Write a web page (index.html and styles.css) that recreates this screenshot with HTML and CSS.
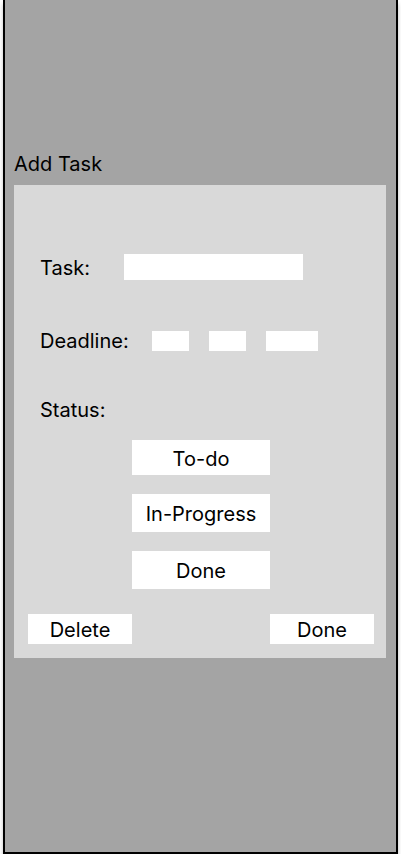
FILE: index.html
```html
<!DOCTYPE html>
<html lang="en">
<head>
    <meta charset="UTF-8">
    <meta name="viewport" content="width=device-width, initial-scale=1.0">
    <title>Add Task</title>
    <link rel="stylesheet" href="styles.css">
</head>
<body>
    <div class="pantalla">
        <h1 class="titulo">Add Task</h1>
        <div class="panel">
            <div class="fila fila-tarea">
                <span class="etiqueta">Task:</span>
                <div class="campo campo-tarea"></div>
            </div>
            <div class="fila fila-fecha">
                <span class="etiqueta">Deadline:</span>
                <div class="fechas">
                    <div class="campo campo-dia"></div>
                    <div class="campo campo-dia"></div>
                    <div class="campo campo-anio"></div>
                </div>
            </div>
            <span class="etiqueta etiqueta-estado">Status:</span>
            <div class="estados">
                <button class="estado estado-todo">To-do</button>
                <button class="estado">In-Progress</button>
                <button class="estado">Done</button>
            </div>
            <div class="acciones">
                <button class="accion">Delete</button>
                <button class="accion">Done</button>
            </div>
        </div>
    </div>
</body>
</html>
```

FILE: styles.css
```css
*{
    margin: 0;
    padding: 0;
    box-sizing: border-box;
}
body{
    background: #fff;
    font-family: Inter, "Noto Sans", sans-serif;
    color: #000;
}
.pantalla{
    width: 395px;
    height: 854px;
    margin-left: 3px;
    padding: 152px 9px 0 9px;
    background: #a4a4a4;
    border: 2px solid #000;
    border-top: none;
    box-shadow: 0 4px 4px rgba(0, 0, 0, 0.25);
}
.titulo{
    font-size: 20px;
    font-weight: 400;
    line-height: 24px;
    margin-bottom: 9px;
}
.panel{
    width: 372px;
    height: 473px;
    padding: 69px 12px 0 14px;
    background: #d9d9d9;
    display: flex;
    flex-direction: column;
}
.etiqueta{
    font-size: 20px;
    line-height: 24px;
}
.fila{
    display: flex;
    align-items: center;
    padding-left: 12px;
}
.fila-tarea{
    height: 26px;
}
.fila-tarea .etiqueta{
    width: 84px;
    padding-top: 1px;
}
.fila-fecha{
    height: 24px;
    margin-top: 49px;
}
.fila-fecha .etiqueta{
    width: 112px;
}
.campo{
    background: #fff;
}
.campo-tarea{
    width: 179px;
    height: 26px;
}
.fechas{
    display: flex;
    gap: 20px;
}
.campo-dia{
    width: 37px;
    height: 20px;
}
.campo-anio{
    width: 52px;
    height: 20px;
}
.etiqueta-estado{
    margin-top: 45px;
    padding-left: 12px;
}
.estados{
    display: flex;
    flex-direction: column;
    gap: 19px;
    margin-top: 18px;
    padding-left: 104px;
}
button{
    font-family: Inter, "Noto Sans", sans-serif;
    font-size: 20px;
    color: #000;
    background: #fff;
    border: none;
}
.estado{
    width: 138px;
    height: 38px;
    padding-top: 2px;
}
.estado-todo{
    height: 35px;
}
.acciones{
    display: flex;
    justify-content: space-between;
    margin-top: 25px;
}
.accion{
    width: 104px;
    height: 30px;
    padding-top: 2px;
}
```
